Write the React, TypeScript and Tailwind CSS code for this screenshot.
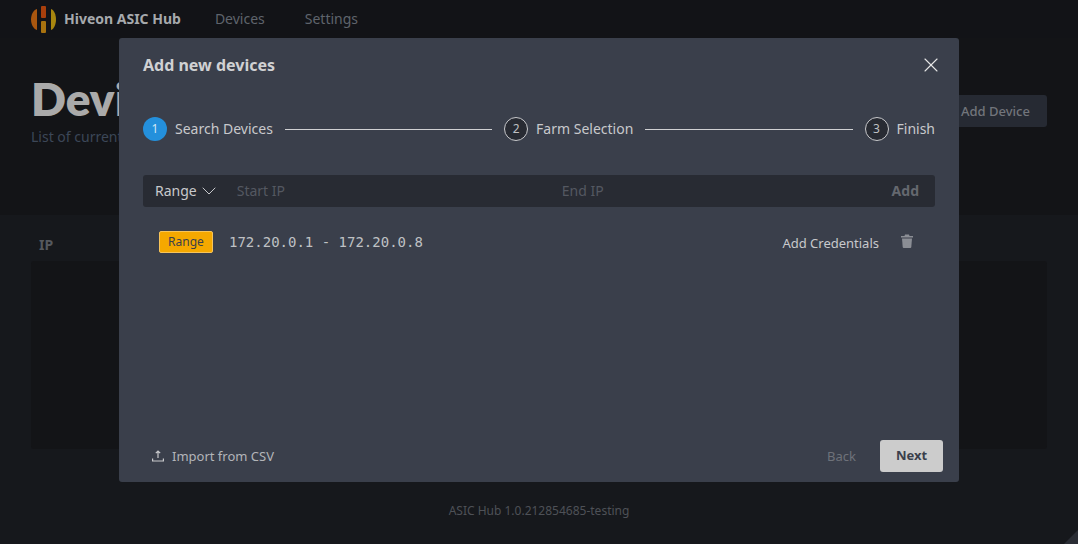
import { ChevronDown, X } from "lucide-react";

const font = { fontFamily: '"Noto Sans", sans-serif' };

function Logo() {
  return (
    <svg width="25" height="27" viewBox="0 0 25 27">
      <path d="M6 3 V24 C2.500 23 0 18.500 0 13.500 C0 8.500 2.500 4 6 3 Z" fill="#a8560f" />
      <path d="M20 3 V24 C23 23 25 18.500 25 13.500 C25 8.500 23 4 20 3 Z" fill="#a8860f" />
      <rect x="10" y="0" width="5" height="12" rx="1" fill="#a83f0c" />
      <rect x="10" y="15" width="5" height="12" rx="1" fill="#a8720f" />
    </svg>
  );
}

function Step({ n, label, active }: { n: number; label: string; active?: boolean }) {
  return (
    <div className="flex items-center gap-2 shrink-0">
      <div
        className={`w-6 h-6 rounded-full flex items-center justify-center text-xs ${
          active ? "bg-[#2490dc] text-[#d5e8f5]" : "bg-[#282b33] border border-[#c8c9cc] text-[#bfc0c3]"
        }`}
      >
        {n}
      </div>
      <span className="text-sm text-[#c8c9cc]">{label}</span>
    </div>
  );
}

function Background() {
  return (
    <div className="h-[544px] bg-[#16181c] flex flex-col">
      <header className="h-[38px] bg-[#121317] flex items-center pl-[31px] shrink-0">
        <Logo />
        <span className="ml-[8px] text-sm font-bold text-[#a6a9ad]">Hiveon ASIC Hub</span>
        <span className="ml-[34px] text-sm text-[#5f646c]">Devices</span>
        <span className="ml-[40px] text-sm text-[#5f646c]">Settings</span>
      </header>
      <div className="h-[177px] bg-[#131417] px-[31px] flex justify-between shrink-0">
        <div>
          <h1 className="mt-[31px] text-[46px] leading-[60px] font-extrabold text-[#aaaaaa]" style={{ fontFamily: "Lato, sans-serif" }}>
            Devices
          </h1>
          <p className="mt-[-2px] text-sm text-[#3c4757]">List of current devices</p>
        </div>
        <button className="mt-[57px] w-[120px] h-8 rounded-[3px] bg-[#262a33] text-[13px] font-medium text-[#72757b] pl-[17px] pt-[2px] text-center">
          Add Device
        </button>
      </div>
      <div className="px-[31px] pt-[20px] flex flex-col">
        <span className="pl-2 text-sm font-bold text-[#55585e]">IP</span>
        <div className="mt-[6px] h-[188px] rounded-[3px] bg-[#131417]" />
      </div>
      <footer className="mt-[54px] text-center text-xs text-[#4e5157]">ASIC Hub 1.0.212854685-testing</footer>
    </div>
  );
}

export default function App() {
  return (
    <div className="relative h-[544px] overflow-hidden" style={font}>
      <Background />
      <div className="absolute right-0 bottom-0 w-0 h-0 border-l-[14px] border-l-transparent border-b-[14px] border-b-[#2a2d34]" />

      <div className="absolute left-[119px] top-[38px] w-[840px] h-[444px] rounded-[3px] bg-[#3a3f4b] flex flex-col">
        <div className="h-[39px] flex items-center justify-between pl-6 pr-4 pt-[15px]">
          <h2 className="text-base leading-6 font-bold text-[#d0d1d3]">Add new devices</h2>
          <X size={24} strokeWidth={1.1} className="text-[#e6e6e6]" />
        </div>

        <div className="mt-[40px] px-6 flex items-center">
          <Step n={1} label="Search Devices" active />
          <div className="flex-1 h-px bg-[#d0d1d3] mx-3" />
          <Step n={2} label="Farm Selection" />
          <div className="flex-1 h-px bg-[#d0d1d3] mx-3" />
          <Step n={3} label="Finish" />
        </div>

        <div className="mt-[34px] mx-6 h-8 rounded-[3px] bg-[#282b33] flex items-center pl-3 pr-4 text-sm">
          <span className="text-[#c8c9cc]">Range</span>
          <ChevronDown size={24} strokeWidth={1} className="text-[#c8c9cc]" />
          <span className="ml-[16px] w-[325px] text-[#545861]">Start IP</span>
          <span className="flex-1 text-[#545861]">End IP</span>
          <span className="font-bold text-[#65686f]">Add</span>
        </div>

        <div className="mt-6 ml-10 mr-[46px] h-[22px] flex items-center">
          <span className="w-[54px] h-[22px] rounded-[2px] bg-[#f5a800] border border-[#f7c45a] flex items-center justify-center text-xs text-[#3a3f4b]">
            Range
          </span>
          <span className="ml-4 text-sm text-[#bfc1c4]" style={{ fontFamily: '"DejaVu Sans Mono", monospace' }}>
            172.20.0.1 - 172.20.0.8
          </span>
          <span className="ml-auto mt-1 text-[13px] text-[#c8c9cc]">Add Credentials</span>
          <svg width="12" height="14" viewBox="0 0 12 14" className="ml-[22px] mb-[2px]" fill="#8b8e95">
            <path d="M4 0.500 H8 L8.500 2 H12 V3.500 H0 V2 H3.500 Z" />
            <path d="M1 4.500 H11 L10.300 13 Q10.200 14 9.300 14 H2.700 Q1.800 14 1.700 13 Z" />
          </svg>
        </div>

        <div className="mt-auto mb-[10px] pl-[33px] pr-4 flex items-center">
          <svg width="12" height="12" viewBox="0 0 12 12" fill="none" stroke="#c8c9cc" strokeWidth="1.2">
            <path d="M6 8 V1 M3.800 3.200 L6 1 L8.200 3.200 M0.600 8.500 V11 H11.400 V8.500" />
          </svg>
          <span className="ml-2 mt-[2px] text-[13px] text-[#b3b5b9]">Import from CSV</span>
          <span className="ml-auto mr-[-1px] mt-[2px] text-[13px] text-[#6e727a]">Back</span>
          <button className="ml-[25px] w-[63px] h-8 rounded-[3px] bg-[#cccccc] text-[13px] font-bold text-[#3a3f4b]">Next</button>
        </div>
      </div>
    </div>
  );
}
